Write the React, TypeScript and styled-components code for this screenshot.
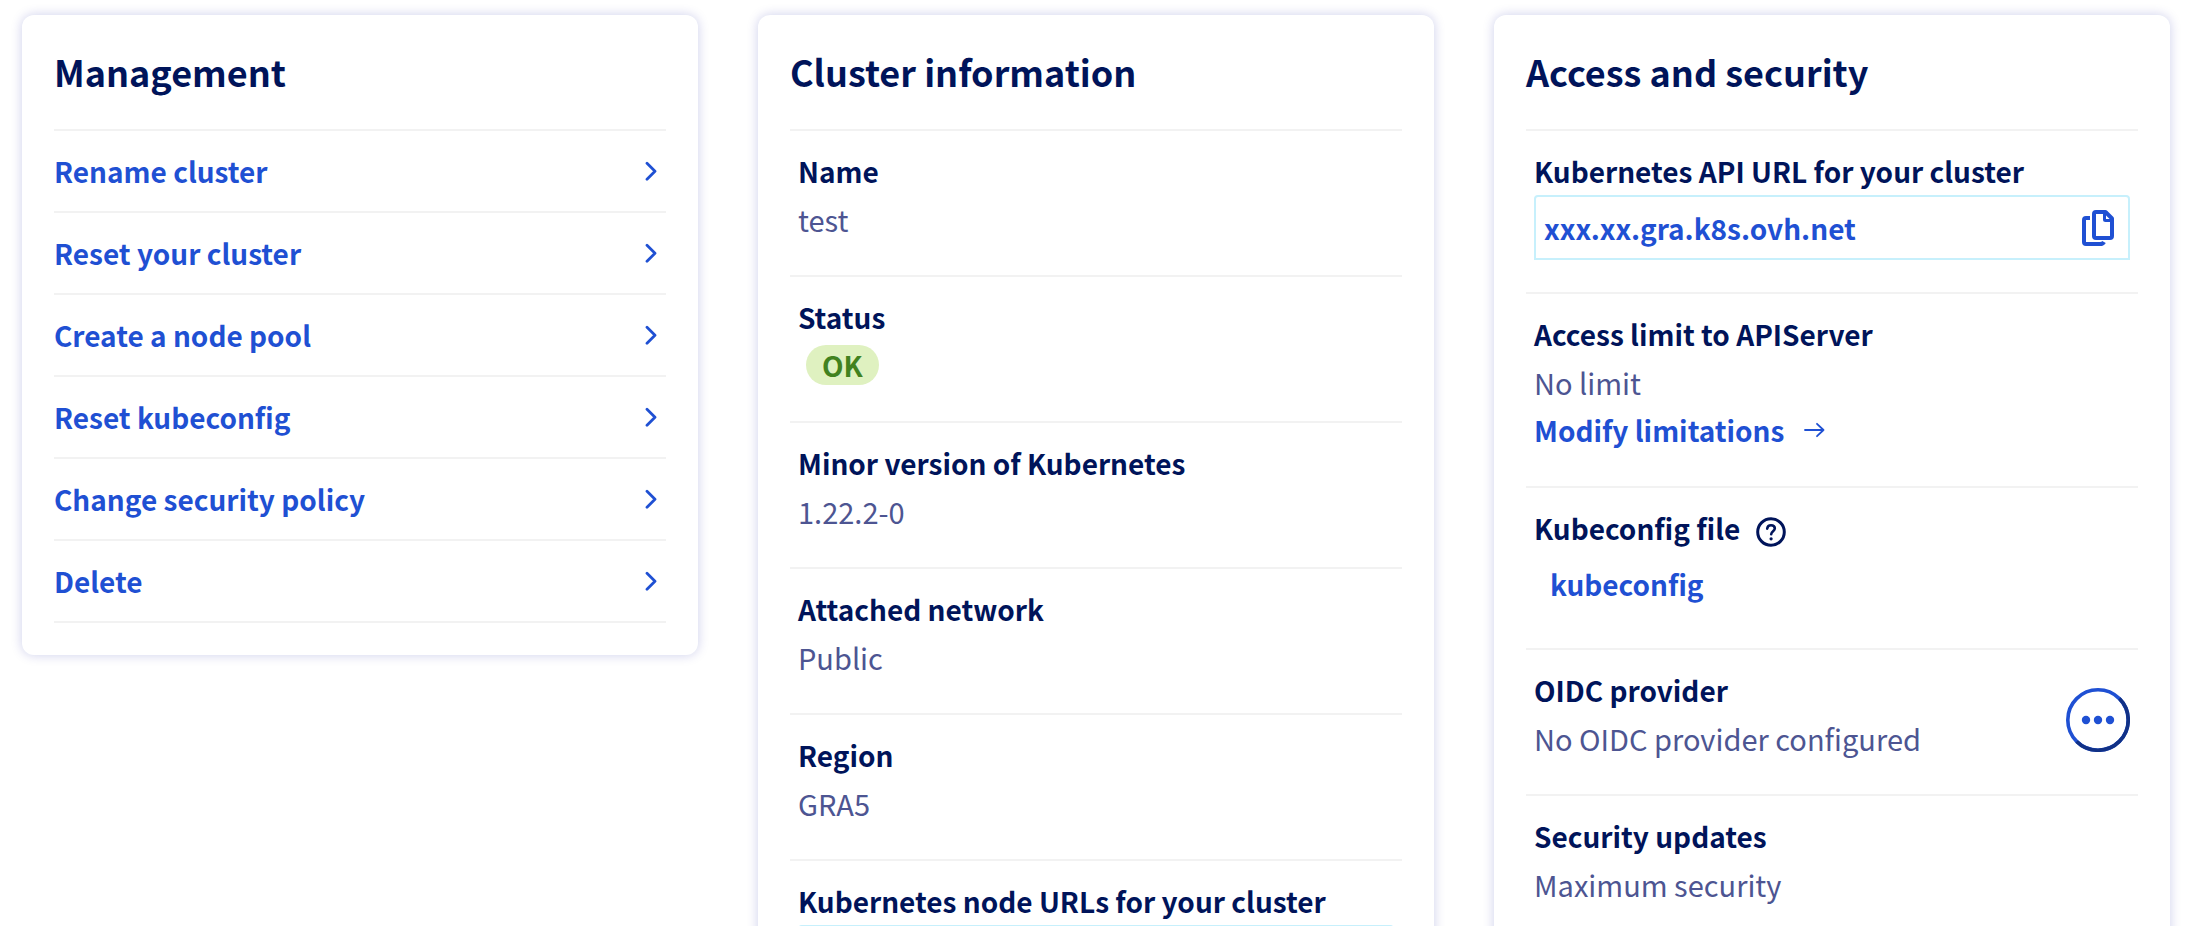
import React from "react";
import styled, { createGlobalStyle } from "styled-components";

const GlobalStyle = createGlobalStyle`
  *, *::before, *::after { box-sizing: border-box; }
  body {
    margin: 0;
    background: #fff;
    color: #4d5592;
    font-family: "Source Sans Pro", "Noto Sans CJK SC", sans-serif;
    font-size: 29px;
    line-height: 48px;
  }
`;

const Page = styled.main`
  display: grid;
  grid-template-columns: repeat(3, minmax(0, 1fr));
  align-items: start;
  gap: 60px;
  height: 100vh;
  overflow: hidden;
  padding: 15px 28px 0 22px;
`;

const Card = styled.section`
  padding: 32px;
  border-radius: 12px;
  background: #fff;
  box-shadow: 0 0 12px rgba(0, 14, 156, 0.2);
`;

const CardTitle = styled.h2`
  margin: 0;
  padding-bottom: 34px;
  color: #00145a;
  font-size: 36px;
  font-weight: 700;
  line-height: 48px;
`;

const ActionList = styled.ul`
  margin: 0;
  padding: 0;
  list-style: none;
  border-bottom: 2px solid #f2f2f2;
`;

const ActionLink = styled.a`
  display: flex;
  align-items: center;
  justify-content: space-between;
  padding: 16px 8px 16px 0;
  border-top: 2px solid #f2f2f2;
  color: #1f50d3;
  font-size: 28px;
  font-weight: 700;
  text-decoration: none;
`;

const Details = styled.dl`
  margin: 0;
`;

const Row = styled.div`
  display: flex;
  align-items: center;
  justify-content: space-between;
  padding: 16px 8px 32px;
  border-top: 2px solid #f2f2f2;
`;

const RowBody = styled.div`
  flex: 1;
  min-width: 0;
`;

const Term = styled.dt`
  display: flex;
  align-items: center;
  gap: 16px;
  color: #00145a;
  font-size: 28px;
  font-weight: 700;
`;

const Value = styled.dd`
  margin: 0;
`;

const Badge = styled.span`
  display: block;
  width: fit-content;
  margin: 4px 8px;
  padding: 0 16px;
  border-radius: 20px;
  background: #dff1c0;
  color: #41821f;
  font-size: 28px;
  font-weight: 700;
  line-height: 40px;
`;

const CopyBox = styled.div`
  display: flex;
  align-items: center;
  justify-content: space-between;
  min-height: 65px;
  padding: 0 14px 0 8px;
  border: 2px solid #c7f0fc;
  border-radius: 4px 4px 0 0;
`;

const TextLink = styled.a`
  display: flex;
  align-items: center;
  gap: 20px;
  width: fit-content;
  color: #1f50d3;
  font-size: 28px;
  font-weight: 700;
  text-decoration: none;
`;

const PlainButton = styled.button`
  display: block;
  padding: 0;
  border: 0;
  background: none;
  color: #1f50d3;
  font: inherit;
  cursor: pointer;
`;

const DownloadButton = styled(PlainButton)`
  padding: 8px 16px;
  font-size: 28px;
  font-weight: 700;
`;

const HelpButton = styled(PlainButton)`
  padding-top: 8px;
  color: #00145a;
  line-height: 0;
`;

const IconButton = styled(PlainButton)`
  line-height: 0;
`;

const MenuButton = styled(PlainButton)`
  width: 64px;
  height: 64px;
  margin-top: 12px;
  border-radius: 50%;
  line-height: 0;
`;

const ChevronIcon = () => (
  <svg width="13" height="20" viewBox="0 0 13 20" fill="none" stroke="currentColor" strokeWidth="2.8" strokeLinecap="round" strokeLinejoin="round" aria-hidden="true">
    <path d="M2 2.3 10 10.3 2 18.3" />
  </svg>
);

const ArrowIcon = () => (
  <svg width="21" height="16" viewBox="0 0 21 16" fill="none" stroke="currentColor" strokeWidth="1.8" strokeLinecap="round" strokeLinejoin="round" aria-hidden="true">
    <path d="M1 8h18.5M13 1.8 19.5 8 13 14.2" />
  </svg>
);

const CopyIcon = () => (
  <svg width="32" height="36" viewBox="0 0 32 36" fill="none" stroke="currentColor" strokeWidth="4" aria-hidden="true">
    <path d="M14 2h9.5L30 8.5V26a2 2 0 0 1-2 2H14a2 2 0 0 1-2-2V4a2 2 0 0 1 2-2Z" strokeLinejoin="round" />
    <path d="M22.5 2v7.5a1 1 0 0 0 1 1H30" strokeWidth="3" />
    <path d="M8 8H4a2 2 0 0 0-2 2v22a2 2 0 0 0 2 2h14q3 0 4-2" />
  </svg>
);

const HelpIcon = () => (
  <svg width="30" height="30" viewBox="0 0 30 30" fill="none" stroke="currentColor" strokeWidth="3" strokeLinecap="round" aria-hidden="true">
    <circle cx="15" cy="15" r="13.3" />
    <path d="M11.2 11.6c.3-2.2 1.8-3.3 3.8-3.3 2.2 0 3.8 1.2 3.8 3.2 0 2.6-3.6 2.9-3.6 5.8" strokeWidth="2.6" />
    <circle cx="15.1" cy="21.8" r="1.6" fill="currentColor" stroke="none" />
  </svg>
);

const MenuIcon = () => (
  <svg width="64" height="64" viewBox="0 0 64 64" fill="none" aria-hidden="true">
    <circle cx="32" cy="32" r="30.2" stroke="#1f50d3" strokeWidth="3.6" />
    <path d="M53.4 10.6A30.2 30.2 0 0 1 10.6 53.4" stroke="#113186" strokeWidth="3.6" />
    <g fill="#1f50d3">
      <circle cx="20" cy="32" r="4.2" />
      <circle cx="32" cy="32" r="4.2" />
      <circle cx="44" cy="32" r="4.2" />
    </g>
  </svg>
);

const actions = [
  "Rename cluster",
  "Reset your cluster",
  "Create a node pool",
  "Reset kubeconfig",
  "Change security policy",
  "Delete",
];

type DetailProps = {
  label: React.ReactNode;
  children: React.ReactNode;
  action?: React.ReactNode;
};

const Detail = ({ label, children, action }: DetailProps) => (
  <Row>
    <RowBody>
      <Term>{label}</Term>
      <Value>{children}</Value>
    </RowBody>
    {action}
  </Row>
);

export default function App() {
  return (
    <>
      <GlobalStyle />
      <Page>
        <Card>
          <CardTitle>Management</CardTitle>
          <ActionList>
            {actions.map((action) => (
              <li key={action}>
                <ActionLink href="#">
                  {action}
                  <ChevronIcon />
                </ActionLink>
              </li>
            ))}
          </ActionList>
        </Card>

        <Card>
          <CardTitle>Cluster information</CardTitle>
          <Details>
            <Detail label="Name">test</Detail>
            <Detail label="Status">
              <Badge>OK</Badge>
            </Detail>
            <Detail label="Minor version of Kubernetes">1.22.2-0</Detail>
            <Detail label="Attached network">Public</Detail>
            <Detail label="Region">GRA5</Detail>
            <Detail label="Kubernetes node URLs for your cluster">
              <CopyBox />
            </Detail>
          </Details>
        </Card>

        <Card>
          <CardTitle>Access and security</CardTitle>
          <Details>
            <Detail label="Kubernetes API URL for your cluster">
              <CopyBox>
                <TextLink href="#">xxx.xx.gra.k8s.ovh.net</TextLink>
                <IconButton type="button" aria-label="Copy">
                  <CopyIcon />
                </IconButton>
              </CopyBox>
            </Detail>
            <Detail label="Access limit to APIServer">
              <div>No limit</div>
              <TextLink href="#">
                Modify limitations
                <ArrowIcon />
              </TextLink>
            </Detail>
            <Detail
              label={
                <>
                  Kubeconfig file
                  <HelpButton type="button" aria-label="Help">
                    <HelpIcon />
                  </HelpButton>
                </>
              }
            >
              <DownloadButton type="button">kubeconfig</DownloadButton>
            </Detail>
            <Detail
              label="OIDC provider"
              action={
                <MenuButton type="button" aria-label="Actions">
                  <MenuIcon />
                </MenuButton>
              }
            >
              No OIDC provider configured
            </Detail>
            <Detail label="Security updates">Maximum security</Detail>
          </Details>
        </Card>
      </Page>
    </>
  );
}
